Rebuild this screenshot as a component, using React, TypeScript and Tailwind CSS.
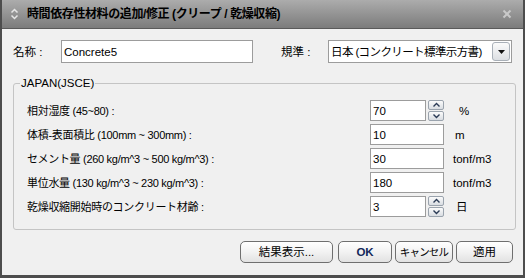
import React from "react";

const font = "font-['Liberation_Sans','Noto_Sans_CJK_JP',sans-serif]";

function Chevron({ up }: { up?: boolean }) {
  return (
    <svg width="9" height="6" viewBox="0 0 9 6">
      <polyline
        points={up ? "1.5,4.5 4.5,1.5 7.5,4.5" : "1.5,1.5 4.5,4.5 7.5,1.5"}
        fill="none"
        stroke="#2a3a55"
        strokeWidth="1.4"
      />
    </svg>
  );
}

function Spinner() {
  return (
    <div className="ml-[2px] flex h-[21px] w-[16px] flex-col gap-[1px]">
      <div className="flex h-[10px] items-center justify-center rounded-[2px] border border-[#9aa3ad] bg-gradient-to-b from-[#fbfbfb] to-[#d9dde2]">
        <Chevron up />
      </div>
      <div className="flex h-[10px] items-center justify-center rounded-[2px] border border-[#9aa3ad] bg-gradient-to-b from-[#fbfbfb] to-[#d9dde2]">
        <Chevron />
      </div>
    </div>
  );
}

function Row({
  label,
  value,
  unit,
  spin,
  unitClass,
}: {
  label: string;
  value: string;
  unit: string;
  spin?: boolean;
  unitClass?: string;
}) {
  return (
    <div className="flex h-[21px] items-center">
      <div className="w-[343px] whitespace-nowrap text-[11px] tracking-[-0.3px]">{label}</div>
      {spin ? (
        <>
          <div className="flex h-[21px] w-[56px] items-center border border-[#9c9c9c] bg-white pl-[2px]">
            {value}
          </div>
          <Spinner />
        </>
      ) : (
        <div className="flex h-[21px] w-[74px] items-center border border-[#9c9c9c] bg-white pl-[2px]">
          {value}
        </div>
      )}
      <div className={"whitespace-nowrap " + (unitClass ?? "ml-[11px]")}>{unit}</div>
    </div>
  );
}

function Btn({ children, className }: { children: React.ReactNode; className: string }) {
  return (
    <div
      className={
        "flex h-[22px] items-center justify-center whitespace-nowrap rounded-[5px] border border-[#6f6f6f] bg-gradient-to-b from-[#ffffff] via-[#f2f2f2] to-[#e2e2e2] " +
        className
      }
    >
      {children}
    </div>
  );
}

export default function App() {
  return (
    <div
      className={
        "flex h-[278px] w-[525px] flex-col overflow-hidden border-x-2 border-b-[3px] border-[#4d4d4d] bg-[#f0f0f0] text-[11.5px] leading-[16px] text-black " +
        font
      }
    >
      {/* Title bar */}
      <div className="flex h-[29px] shrink-0 items-center border-b border-[#5a5a5a] bg-gradient-to-b from-[#acacac] to-[#7c7c7c] pl-[8px] pr-[11px]">
        <svg width="9" height="12" viewBox="0 0 9 12">
          <polyline points="1.5,4.5 4.5,1.5 7.5,4.5" fill="none" stroke="#e6e6e6" strokeWidth="1.5" />
          <polyline points="1.5,7.5 4.5,10.5 7.5,7.5" fill="none" stroke="#e6e6e6" strokeWidth="1.5" />
        </svg>
        <div className="ml-[8px] whitespace-nowrap text-[12px] font-bold tracking-[-0.4px] text-black">
          時間依存性材料の追加/修正 (クリープ / 乾燥収縮)
        </div>
        <div className="flex-1" />
        <svg width="10" height="10" viewBox="0 0 10 10">
          <line x1="1.5" y1="1.5" x2="8.5" y2="8.5" stroke="#c9c9c9" strokeWidth="2" />
          <line x1="8.5" y1="1.5" x2="1.5" y2="8.5" stroke="#c9c9c9" strokeWidth="2" />
        </svg>
      </div>

      {/* Name / standard row */}
      <div className="mt-[11px] flex h-[23px] items-center pl-[11px]">
        <div className="w-[48px] whitespace-nowrap">名称 :</div>
        <div className="flex h-[23px] w-[192px] items-center border border-[#9c9c9c] bg-white pl-[2px]">
          Concrete5
        </div>
        <div className="ml-[28px] w-[47px] whitespace-nowrap">規準 :</div>
        <div className="flex h-[23px] w-[184px] items-center overflow-hidden border border-[#9c9c9c] bg-white pl-[2px]">
          <div className="flex-1 overflow-hidden whitespace-nowrap tracking-[-0.6px]">日本 (コンクリート標準示方書)</div>
          <div className="mr-[1px] flex h-[19px] w-[18px] shrink-0 items-center justify-center rounded-[3px] border border-[#a9b0b8] bg-gradient-to-b from-[#fbfbfb] to-[#dcdfe3]">
            <svg width="7" height="4" viewBox="0 0 7 4">
              <polygon points="0,0 7,0 3.5,4" fill="#111" />
            </svg>
          </div>
        </div>
      </div>

      {/* Group */}
      <fieldset className="ml-[11px] mt-[12px] w-[503px] rounded-[3px] border border-[#c4c4c4] px-[6px] pb-[12px]">
        <legend className="px-[1px]">JAPAN(JSCE)</legend>
        <div className="flex flex-col gap-[3px] pl-[7px] pt-[9px]">
          <Row label="相対湿度 (45~80) :" value="70" unit="%" spin unitClass="ml-[15px]" />
          <Row label="体積-表面積比 (100mm ~ 300mm) :" value="10" unit="m" />
          <Row label="セメント量 (260 kg/m^3 ~ 500 kg/m^3) :" value="30" unit="tonf/m3" unitClass="ml-[9px]" />
          <Row label="単位水量 (130 kg/m^3 ~ 230 kg/m^3) :" value="180" unit="tonf/m3" unitClass="ml-[9px]" />
          <Row label="乾燥収縮開始時のコンクリート材齢 :" value="3" unit="日" spin unitClass="ml-[12px]" />
        </div>
      </fieldset>

      {/* Buttons */}
      <div className="mt-[11px] flex justify-end pr-[10px]">
        <Btn className="w-[93px]">結果表示...</Btn>
        <Btn className="ml-[5px] w-[54px] font-bold text-[#12285a]">OK</Btn>
        <Btn className="ml-[3px] w-[58px] text-[10.5px] tracking-[-0.8px]">キャンセル</Btn>
        <Btn className="ml-[3px] w-[57px]">適用</Btn>
      </div>
    </div>
  );
}
